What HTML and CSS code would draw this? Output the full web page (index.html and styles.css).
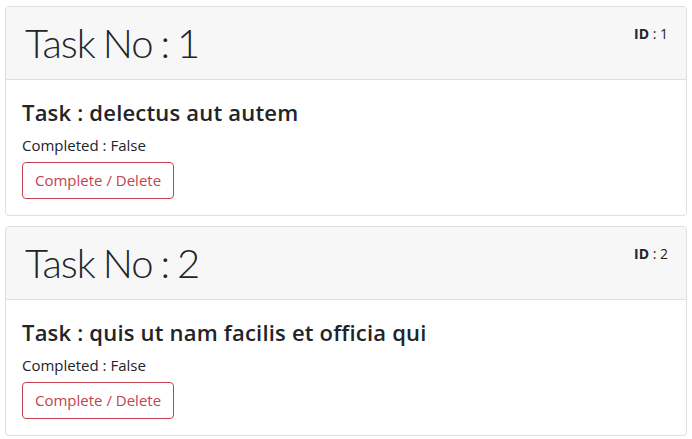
FILE: index.html
```html
<!DOCTYPE html>
<html>
<head>
<meta charset="utf-8">
<link rel="stylesheet" href="styles.css">
</head>
<body>
<div class="list">
  <div class="card">
    <div class="card-header">
      <h1 class="task-no">Task No : 1</h1>
      <span class="task-id"><b>ID</b> : 1</span>
    </div>
    <div class="card-body">
      <h4 class="task-title">Task : delectus aut autem</h4>
      <p class="task-status">Completed : False</p>
      <button class="btn-outline-danger">Complete / Delete</button>
    </div>
  </div>
  <div class="card">
    <div class="card-header">
      <h1 class="task-no">Task No : 2</h1>
      <span class="task-id"><b>ID</b> : 2</span>
    </div>
    <div class="card-body">
      <h4 class="task-title">Task : quis ut nam facilis et officia qui</h4>
      <p class="task-status">Completed : False</p>
      <button class="btn-outline-danger">Complete / Delete</button>
    </div>
  </div>
</div>
</body>
</html>
```
FILE: styles.css
```css
* { box-sizing: border-box; }
html, body { margin: 0; padding: 0; background: #fff; }
body {
  font-family: "Open Sans", "Noto Sans", sans-serif;
  color: #212529;
  font-size: 16px;
  line-height: 1.5;
}
.list {
  display: flex;
  flex-direction: column;
  gap: 10px;
  padding: 6px 5px 0 5px;
}
.card {
  border: 1px solid #dfdfdf;
  border-radius: 4px;
  background: #fff;
  overflow: hidden;
}
.card-header {
  background: #f7f7f7;
  border-bottom: 1px solid #dfdfdf;
  padding: 12px 18px 12px 19px;
  display: flex;
  justify-content: space-between;
  align-items: flex-start;
  height: 73px;
}
.task-no {
  margin: 0;
  font-family: "Lato", "Open Sans", sans-serif;
  font-size: 40px;
  font-weight: 300;
  line-height: 48px;
  letter-spacing: -1px;
  word-spacing: -2px;
}
.task-id {
  font-size: 14px;
  line-height: 20px;
  margin-top: 5px;
  color: #212529;
}
.task-id b { font-weight: 700; }
.card-body {
  padding: 18px 16px 16px 16px;
}
.task-title {
  margin: 0 0 8px 0;
  font-size: 22px;
  font-weight: 600;
  line-height: 28px;
  letter-spacing: 0.2px;
}
.task-status {
  margin: 0 0 6px 0;
  font-size: 15px;
  line-height: 22px;
}
.btn-outline-danger {
  font-family: inherit;
  font-size: 15px;
  line-height: 23px;
  padding: 6px 12px;
  color: #c4434f;
  background: transparent;
  border: 1px solid #c4434f;
  border-radius: 4px;
  display: block;
}
```
